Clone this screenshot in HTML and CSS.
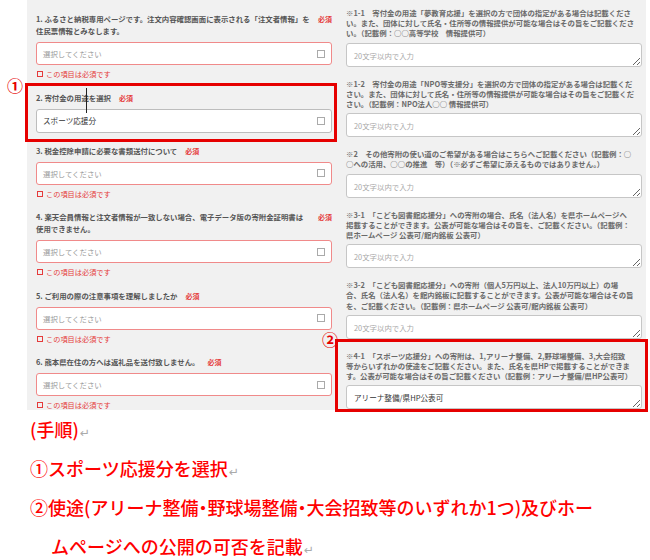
FILE: index.html
```html
<!DOCTYPE html>
<html lang="ja">
<head>
<meta charset="utf-8">
<title>寄付金の用途</title>
<link rel="stylesheet" href="styles.css">
</head>
<body>
<div class="page">
  <div class="panel">
    <div class="col left">
      <div class="group">
        <div class="q-label"><span class="q-text">1. ふるさと納税専用ページです。注文内容確認画面に表示される「注文者情報」を住民票情報とみなします。</span><span class="req">必須</span></div>
        <div class="sel invalid"><span>選択してください</span><span class="chk"></span></div>
        <div class="err"><span class="err-box"></span>この項目は必須です</div>
      </div>
      <div class="group no-err">
        <div class="q-label"><span class="q-text">2. 寄付金の用途を選択</span><span class="req">必須</span></div>
        <div class="sel filled"><span>スポーツ応援分</span><span class="chk"></span></div>
      </div>
      <div class="group">
        <div class="q-label"><span class="q-text">3. 税金控除申請に必要な書類送付について</span><span class="req">必須</span></div>
        <div class="sel invalid"><span>選択してください</span><span class="chk"></span></div>
        <div class="err"><span class="err-box"></span>この項目は必須です</div>
      </div>
      <div class="group">
        <div class="q-label"><span class="q-text">4. 楽天会員情報と注文者情報が一致しない場合、電子データ版の寄附金証明書は使用できません。</span><span class="req">必須</span></div>
        <div class="sel invalid"><span>選択してください</span><span class="chk"></span></div>
        <div class="err"><span class="err-box"></span>この項目は必須です</div>
      </div>
      <div class="group">
        <div class="q-label"><span class="q-text">5. ご利用の際の注意事項を理解しましたか</span><span class="req">必須</span></div>
        <div class="sel invalid"><span>選択してください</span><span class="chk"></span></div>
        <div class="err"><span class="err-box"></span>この項目は必須です</div>
      </div>
      <div class="group">
        <div class="q-label"><span class="q-text">6. 熊本県在住の方へは返礼品を送付致しません。</span><span class="req">必須</span></div>
        <div class="sel invalid"><span>選択してください</span><span class="chk"></span></div>
        <div class="err"><span class="err-box"></span>この項目は必須です</div>
      </div>
    </div>
    <div class="col right">
      <div class="note-group">
        <p class="note">※1-1　寄付金の用途「夢教育応援」を選択の方で団体の指定がある場合は記載くださ<br>い。また、団体に対して氏名・住所等の情報提供が可能な場合はその旨をご記載くださ<br>い。（記載例：○○高等学校　情報提供可）</p>
        <textarea class="ta" placeholder="20文字以内で入力"></textarea>
      </div>
      <div class="note-group">
        <p class="note">※1-2　寄付金の用途「NPO等支援分」を選択の方で団体の指定がある場合は記載くだ<br>さい。また、団体に対して氏名・住所等の情報提供が可能な場合はその旨をご記載くだ<br>さい。（記載例：NPO法人○○ 情報提供可）</p>
        <textarea class="ta" placeholder="20文字以内で入力"></textarea>
      </div>
      <div class="note-group">
        <p class="note">※2　その他寄附の使い道のご希望がある場合はこちらへご記載ください（記載例：○<br>○への活用、○○の推進　等）（※必ずご希望に添えるものではありません。）</p>
        <textarea class="ta" placeholder="20文字以内で入力"></textarea>
      </div>
      <div class="note-group">
        <p class="note">※3-1　「こども図書館応援分」への寄附の場合、氏名（法人名）を県ホームページへ<br>掲載することができます。公表が可能な場合はその旨を、ご記載ください。（記載例：<br>県ホームページ 公表可/館内銘板 公表可）</p>
        <textarea class="ta" placeholder="20文字以内で入力"></textarea>
      </div>
      <div class="note-group">
        <p class="note">※3-2　「こども図書館応援分」への寄附（個人5万円以上、法人10万円以上）の場<br>合、氏名（法人名）を館内銘板に記載することができます。公表が可能な場合はその旨<br>を、ご記載ください。（記載例：県ホームページ 公表可/館内銘板 公表可）</p>
        <textarea class="ta" placeholder="20文字以内で入力"></textarea>
      </div>
      <div class="note-group">
        <p class="note">※4-1　「スポーツ応援分」への寄附は、1,アリーナ整備、2,野球場整備、3,大会招致<br>等からいずれかの使途をご記載ください。また、氏名を県HPで掲載することができま<br>す。公表が可能な場合はその旨ご記載ください（記載例：アリーナ整備/県HP公表可）</p>
        <textarea class="ta filled-ta">アリーナ整備/県HP公表可</textarea>
      </div>
    </div>
  </div>

  <div class="steps">
    <p class="step">(手順)<span class="ret">↵</span></p>
    <p class="step">①スポーツ応援分を選択<span class="ret">↵</span></p>
    <p class="step hang">②使途(アリーナ整備<span class="dot">・</span>野球場整備<span class="dot">・</span>大会招致等のいずれか1つ)及びホー<br>ムページへの公開の可否を記載<span class="ret">↵</span></p>
  </div>

  <div class="anno anno1"></div>
  <span class="num num1">①</span>
  <div class="anno anno2"></div>
  <span class="num num2">②</span>
  <span class="cursor"></span>
</div>
</body>
</html>
```

FILE: styles.css
```css
* { box-sizing: border-box; }
html, body { margin: 0; padding: 0; background: #fff; }
body { font-family: "Noto Sans CJK JP", "Noto Sans", sans-serif; }
p { margin: 0; }

.page { position: relative; width: 650px; height: 560px; overflow: hidden; }

.panel {
  margin-left: 27px;
  width: 619px;
  height: 410px;
  background: #f1f1f1;
  padding-left: 9px;
  display: grid;
  grid-template-columns: 296px 296px;
  column-gap: 14px;
  align-items: start;
}

/* left column */
.left { padding-top: 13px; display: flex; flex-direction: column; }
.group { margin-bottom: 11.5px; }
.group.no-err { margin-bottom: 12px; }
.q-label {
  display: flex;
  font-size: 7.4px;
  line-height: 12px;
  font-weight: 700;
  color: #555;
}
.q-text { flex: 0 1 auto; }
.req { flex: none; margin-left: 8px; color: #e53b3b; font-size: 7px; font-weight: 700; }

.sel {
  margin-top: 5px;
  height: 23px;
  background: #fff;
  border: 1px solid #bdbdbd;
  border-radius: 3px;
  padding: 0 6px 0 6px;
  display: flex;
  align-items: center;
  justify-content: space-between;
  font-size: 7.4px;
  color: #999;
}
.sel.invalid { border-color: #f08a8a; }
.sel.filled { height: 24px; color: #333; font-size: 7.6px; }
.chk { width: 8px; height: 8px; border: 1px solid #aaa; background: #fff; }

.err {
  margin-top: 3px;
  display: flex;
  align-items: center;
  gap: 3px;
  font-size: 7.2px;
  line-height: 12px;
  color: #e53b3b;
  padding-left: 1px;
}
.err-box { width: 6px; height: 6px; border: 1px solid #e53b3b; }

/* right column */
.right { padding-top: 8px; display: flex; flex-direction: column; }
.note-group { margin-bottom: 12px; }
.note {
  font-size: 7.4px;
  line-height: 10.2px;
  font-weight: 700;
  color: #6a6a6a;
  white-space: nowrap;
}
.ta {
  display: block;
  margin-top: 4px;
  width: 296px;
  height: 24px;
  padding: 6px 7px;
  border: 1px solid #c6c6c6;
  border-radius: 3px;
  background: #fff;
  font-family: "Noto Sans CJK JP", "Noto Sans", sans-serif;
  font-size: 7.4px;
  line-height: 11px;
  color: #333;
  resize: both;
  overflow: hidden;
}
.ta::placeholder { color: #a8a8a8; }
.filled-ta { font-size: 7.6px; }

/* steps */
.steps { padding-left: 30px; color: #ff0000; }
.step {
  font-size: 18px;
  line-height: 39px;
  font-weight: 500;
}
.step.hang { padding-left: 21px; text-indent: -21px; }
.dot { font-feature-settings: "palt"; }
.ret { color: #aaa; font-family: "DejaVu Sans", sans-serif; font-size: 12px; line-height: 0; font-weight: 400; margin-left: 1px; }

/* annotations overlaying the form */
.anno { position: absolute; border: 3px solid #e60000; }
.anno1 { left: 25px; top: 83px; width: 312px; height: 59px; }
.anno2 { left: 335px; top: 339px; width: 313px; height: 73px; }
.num {
  position: absolute;
  color: #e60000;
  font-size: 16px;
  line-height: 16px;
  font-weight: 700;
}
.num1 { left: 7px; top: 77px; }
.num2 { left: 322px; top: 331px; }
.cursor { position: absolute; left: 86px; top: 88px; width: 1px; height: 25px; background: #222; }
```
